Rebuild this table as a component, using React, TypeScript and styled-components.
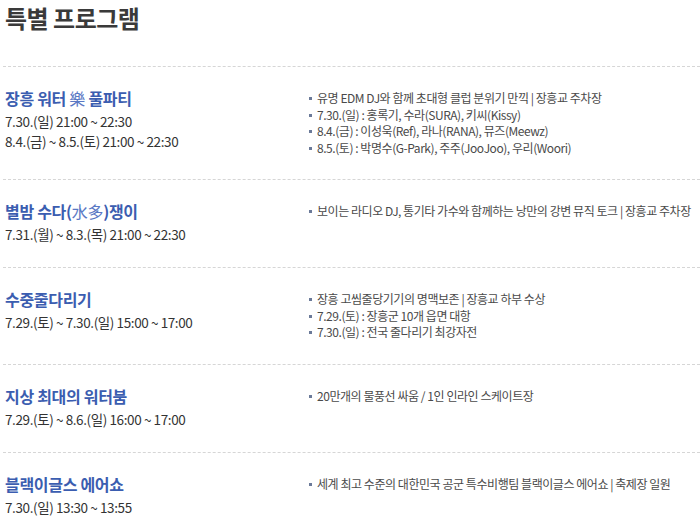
import React from 'react';
import styled, { createGlobalStyle } from 'styled-components';

const GlobalStyle = createGlobalStyle`
  body {
    margin: 0;
    background: #fff;
    font-family: "Noto Sans CJK KR", "Noto Sans", sans-serif;
    color: #333;
  }
`;

const Page = styled.div`
  width: 700px;
  padding: 0 0 0 3px;
  box-sizing: border-box;
`;

const Heading = styled.h2`
  margin: 0 0 31px 2px;
  font-size: 24px;
  line-height: 35px;
  font-weight: 700;
  color: #3a3a3a;
  letter-spacing: -0.5px;
`;

const ProgramList = styled.ul`
  list-style: none;
  margin: 0;
  padding: 0;
`;

const ProgramRow = styled.li`
  display: grid;
  grid-template-columns: 299px 1fr;
  padding: 18px 0 23px 2px;
  border-top: 1px dashed #d6d6d6;
`;

const Left = styled.div`
  display: flex;
  flex-direction: column;
`;

const Title = styled.h3`
  margin: 0;
  font-size: 16px;
  line-height: 26px;
  font-weight: 700;
  color: #3b5db0;
  letter-spacing: -0.3px;
`;

const Hanja = styled.span`
  font-weight: 400;
  color: #5a78c4;
`;

const DateLine = styled.div`
  font-size: 13.5px;
  line-height: 20px;
  color: #333;
  letter-spacing: -0.4px;
`;

const Details = styled.ul`
  list-style: none;
  margin: 5px 0 0;
  padding: 0;
`;

const Detail = styled.li`
  position: relative;
  padding-left: 13px;
  font-size: 12px;
  line-height: 16.5px;
  color: #4a4a4a;
  letter-spacing: -0.45px;
  white-space: nowrap;

  &::before {
    content: '';
    position: absolute;
    left: 5px;
    top: 7px;
    width: 3px;
    height: 3px;
    background: #6b7a99;
  }
`;

interface Program {
  title: React.ReactNode;
  dates: string[];
  details: string[];
}

const programs: Program[] = [
  {
    title: <>장흥 워터 <Hanja>樂</Hanja> 풀파티</>,
    dates: ['7.30.(일) 21:00 ~ 22:30', '8.4.(금) ~ 8.5.(토) 21:00 ~ 22:30'],
    details: [
      '유명 EDM DJ와 함께 초대형 클럽 분위기 만끽 | 장흥교 주차장',
      '7.30.(일) : 홍록기, 수라(SURA), 키씨(Kissy)',
      '8.4.(금) : 이성욱(Ref), 라나(RANA), 뮤즈(Meewz)',
      '8.5.(토) : 박명수(G-Park), 주주(JooJoo), 우리(Woori)',
    ],
  },
  {
    title: <>별밤 수다(<Hanja>水多</Hanja>)쟁이</>,
    dates: ['7.31.(월) ~ 8.3.(목) 21:00 ~ 22:30'],
    details: ['보이는 라디오 DJ, 통기타 가수와 함께하는 낭만의 강변 뮤직 토크 | 장흥교 주차장'],
  },
  {
    title: '수중줄다리기',
    dates: ['7.29.(토) ~ 7.30.(일) 15:00 ~ 17:00'],
    details: [
      '장흥 고씸줄당기기의 명맥보존 | 장흥교 하부 수상',
      '7.29.(토) : 장흥군 10개 읍면 대항',
      '7.30.(일) : 전국 줄다리기 최강자전',
    ],
  },
  {
    title: '지상 최대의 워터붐',
    dates: ['7.29.(토) ~ 8.6.(일) 16:00 ~ 17:00'],
    details: ['20만개의 물풍선 싸움 / 1인 인라인 스케이트장'],
  },
  {
    title: '블랙이글스 에어쇼',
    dates: ['7.30.(일) 13:30 ~ 13:55'],
    details: ['세계 최고 수준의 대한민국 공군 특수비행팀 블랙이글스 에어쇼 | 축제장 일원'],
  },
];

const App: React.FC = () => {
  return (
    <Page>
      <GlobalStyle />
      <Heading>특별 프로그램</Heading>
      <ProgramList>
        {programs.map((p, i) => (
          <ProgramRow key={i}>
            <Left>
              <Title>{p.title}</Title>
              {p.dates.map((d) => (
                <DateLine key={d}>{d}</DateLine>
              ))}
            </Left>
            <Details>
              {p.details.map((d) => (
                <Detail key={d}>{d}</Detail>
              ))}
            </Details>
          </ProgramRow>
        ))}
      </ProgramList>
    </Page>
  );
};

export default App;
